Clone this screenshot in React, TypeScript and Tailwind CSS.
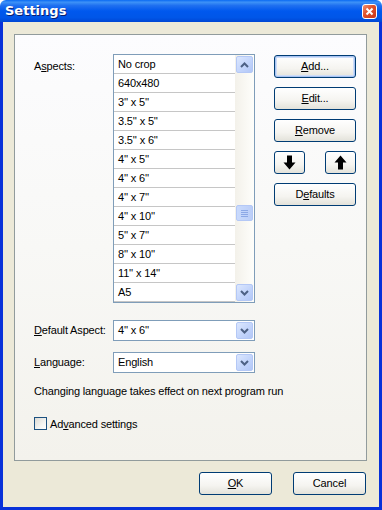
import React from 'react';

const aspects = [
  'No crop',
  '640x480',
  '3\'\' x 5\'\'',
  '3.5\'\' x 5\'\'',
  '3.5\'\' x 6\'\'',
  '4\'\' x 5\'\'',
  '4\'\' x 6\'\'',
  '4\'\' x 7\'\'',
  '4\'\' x 10\'\'',
  '5\'\' x 7\'\'',
  '8\'\' x 10\'\'',
  '11\'\' x 14\'\'',
  'A5',
];

function Chevron({ up }: { up?: boolean }) {
  return (
    <svg width="9" height="6" viewBox="0 0 9 6">
      <path
        d={up ? 'M1 5 L4.5 1.5 L8 5' : 'M1 1 L4.5 4.5 L8 1'}
        fill="none"
        stroke="#4D6185"
        strokeWidth="2"
      />
    </svg>
  );
}

function ScrollBtn({ up }: { up?: boolean }) {
  return (
    <div className="h-[17px] w-[17px] flex items-center justify-center rounded-[2px] border border-[#B4C8F6] bg-[linear-gradient(135deg,#DCE7FE_0%,#C1D3FB_60%,#B2C7F7_100%)]">
      <Chevron up={up} />
    </div>
  );
}

function XpButton({ children, className = '', focused = false }: { children: React.ReactNode; className?: string; focused?: boolean }) {
  return (
    <div
      className={`h-[23px] flex items-center justify-center rounded-[3px] border border-[#003C74] bg-[linear-gradient(to_bottom,#FFFFFF_0%,#F5F4F0_60%,#E3E2DA_100%)] ${focused ? 'shadow-[inset_0_0_0_1px_#A8C4F2,inset_0_0_0_2px_#CEDDF8]' : ''} ${className}`}
    >
      {children}
    </div>
  );
}

function Combo({ value }: { value: string }) {
  return (
    <div className="w-[142px] h-[21px] border border-[#7F9DB9] bg-white flex items-center">
      <span className="flex-1 pl-[4px]">{value}</span>
      <div className="mr-[1px]">
        <ScrollBtn />
      </div>
    </div>
  );
}

function Arrow({ up }: { up?: boolean }) {
  return (
    <svg width="13" height="15" viewBox="0 0 13 15">
      <path
        d={up ? 'M6.5 0.5 L12.5 7.5 L9 7.5 L9 14.5 L4 14.5 L4 7.5 L0.5 7.5 Z' : 'M6.5 14.5 L12.5 7.5 L9 7.5 L9 0.5 L4 0.5 L4 7.5 L0.5 7.5 Z'}
        fill="#000"
      />
    </svg>
  );
}

export default function App() {
  return (
    <div className="w-[382px] h-[510px] flex flex-col font-['Liberation_Sans',Arial,sans-serif] text-[11px] tracking-[-0.15px] text-black overflow-hidden">
      {/* Title bar */}
      <div className="h-[22px] flex items-center justify-between pl-[5px] pr-[5px] rounded-t-[6px] bg-[linear-gradient(to_bottom,#0A6AF3_0%,#3D92F7_10%,#1F70F0_25%,#0058EE_50%,#0056E8_80%,#0046D4_100%)]">
        <span className="text-white font-bold text-[13px] tracking-normal font-['DejaVu_Sans',sans-serif] [text-shadow:1px_1px_0_#0A1E6E]">Settings</span>
        <div className="w-[15px] h-[15px] rounded-[3px] border border-white bg-[linear-gradient(135deg,#F09070_0%,#E0502A_45%,#C8361A_100%)] flex items-center justify-center">
          <svg width="9" height="9" viewBox="0 0 9 9">
            <path d="M1.5 1.5 L7.5 7.5 M7.5 1.5 L1.5 7.5" stroke="#fff" strokeWidth="2" />
          </svg>
        </div>
      </div>

      {/* Body */}
      <div className="flex-1 flex flex-col bg-[#ECE9D8] border-x-[3px] border-b-[3px] border-[#0831D9]">
        {/* Panel */}
        <div className="mt-[12px] ml-[11px] mr-[12px] h-[427px] border border-[#919B9C] bg-[linear-gradient(to_bottom,#FCFCFE_0%,#F8F8F6_50%,#F3F2EC_100%)] pl-[19px] pt-[19px]">
          <div className="flex">
            <div className="w-[79px] pt-[4px]">
              A<span className="underline">s</span>pects:
            </div>
            {/* List */}
            <div className="w-[142px] h-[249px] border border-[#7F9DB9] bg-white flex">
              <div className="flex-1 flex flex-col">
                {aspects.map((a) => (
                  <div key={a} className="h-[19px] flex items-center pl-[4px] border-b border-[#C6C6C6]">
                    {a}
                  </div>
                ))}
              </div>
              <div className="w-[19px] flex flex-col items-center justify-between py-[1px] bg-[linear-gradient(to_right,#F3F1EA_0%,#FEFEFB_100%)]">
                <ScrollBtn up />
                <div className="mt-[132px] h-[16px] w-[17px] rounded-[2px] border border-[#B4C8F6] bg-[linear-gradient(to_right,#C9DAFC_0%,#BBCEF8_100%)] flex flex-col items-center justify-center gap-[1px]">
                  <div className="w-[7px] h-[1px] bg-[#8CA8E6]" />
                  <div className="w-[7px] h-[1px] bg-[#8CA8E6]" />
                  <div className="w-[7px] h-[1px] bg-[#8CA8E6]" />
                  <div className="w-[7px] h-[1px] bg-[#8CA8E6]" />
                </div>
                <div className="flex-1" />
                <ScrollBtn />
              </div>
            </div>
            {/* Buttons */}
            <div className="ml-[19px] w-[82px] flex flex-col gap-[9px] pt-[1px]">
              <XpButton focused>
                <span><span className="underline">A</span>dd...</span>
              </XpButton>
              <XpButton>
                <span><span className="underline">E</span>dit...</span>
              </XpButton>
              <XpButton>
                <span><span className="underline">R</span>emove</span>
              </XpButton>
              <div className="flex justify-between">
                <XpButton className="w-[31px]">
                  <Arrow />
                </XpButton>
                <XpButton className="w-[31px]">
                  <Arrow up />
                </XpButton>
              </div>
              <XpButton>
                <span>D<span className="underline">e</span>faults</span>
              </XpButton>
            </div>
          </div>

          <div className="flex items-center mt-[17px]">
            <div className="w-[79px]">
              <span className="underline">D</span>efault Aspect:
            </div>
            <Combo value={'4\'\' x 6\'\''} />
          </div>

          <div className="flex items-center mt-[11px]">
            <div className="w-[79px]">
              <span className="underline">L</span>anguage:
            </div>
            <Combo value="English" />
          </div>

          <div className="mt-[10px]">Changing language takes effect on next program run</div>

          <div className="flex items-center mt-[16px] gap-[3px]">
            <div className="w-[13px] h-[13px] border border-[#1C5180] bg-[linear-gradient(135deg,#DCDBD5_0%,#F4F4F1_60%,#FFFFFF_100%)]" />
            <span>
              Ad<span className="underline">v</span>anced settings
            </span>
          </div>
        </div>

        {/* Bottom buttons */}
        <div className="flex justify-end gap-[21px] mt-[11px] mr-[13px]">
          <XpButton className="w-[73px]">
            <span><span className="underline">O</span>K</span>
          </XpButton>
          <XpButton className="w-[73px]">
            <span>Cancel</span>
          </XpButton>
        </div>
      </div>
    </div>
  );
}
